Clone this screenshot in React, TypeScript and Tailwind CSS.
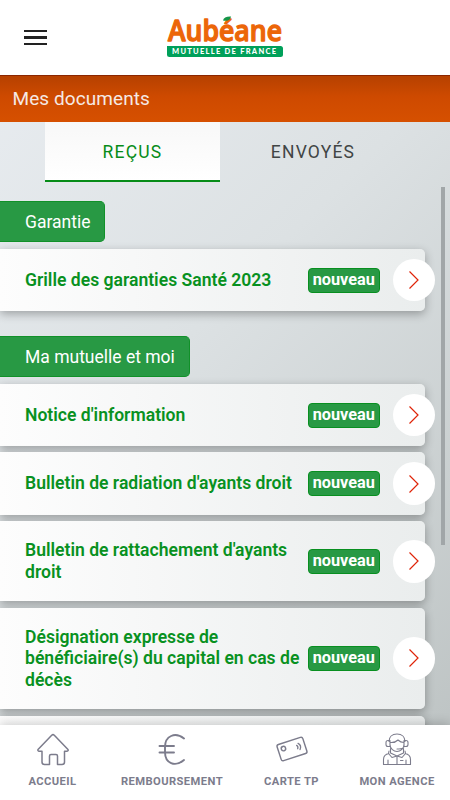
import React from "react";

const documents = [
  { lines: ["Notice d'information"], height: "h-[62px]" },
  { lines: ["Bulletin de radiation d'ayants droit"], height: "h-[62.5px]" },
  { lines: ["Bulletin de rattachement d'ayants", "droit"], height: "h-[80px]" },
  { lines: ["Désignation expresse de", "bénéficiaire(s) du capital en cas de", "décès"], height: "h-[101.5px]" },
  { lines: [""], height: "h-[62px]" },
];

function Logo() {
  return (
    <svg width="116" height="52" viewBox="0 -10 116 52" className="block overflow-visible">
      <text x="1" y="25" textLength="114" lengthAdjust="spacingAndGlyphs" fontFamily="'Open Sans', sans-serif" fontWeight="600" fontSize="29" fill="#ec6608" stroke="#ec6608" strokeWidth="1.3" strokeLinejoin="round">Aubéane</text>
      <path d="M56 4.400C56.500 1.500 59.500 0.300 64 0.500C63.500 4 60.500 5.500 56 4.400Z" fill="#159548" />
      <path d="M0 30h113.500q2.500 0 2.500 2.500v6q0 2.500-2.500 2.500H2.500Q0 41 0 38.500Z" fill="#00a05a" />
      <text x="5" y="38" textLength="104" fontFamily="Lato, sans-serif" fontWeight="900" fontSize="7.500" fill="#fff">MUTUELLE DE FRANCE</text>
    </svg>
  );
}

function Document({ lines, height }: { lines: string[]; height: string }) {
  return (
    <div className={`flex w-[425px] shrink-0 items-center rounded-r-[5px] bg-gradient-to-r from-[#fdfdfd] to-[#eaeded] pl-[25px] shadow-[0_3px_10px_rgba(0,0,0,0.3)] ${height}`}>
      <div className="w-[282.500px] shrink-0 pt-px text-[17.570px] font-semibold leading-[21.330px] text-[#089121]">
        {lines.map((line) => (
          <div key={line} className="whitespace-nowrap">{line}</div>
        ))}
      </div>
      {lines[0] && (
        <>
          <div className="flex h-[25px] w-[72.500px] shrink-0 items-center justify-center rounded-[4px] border border-[#088f20] bg-[#289944] text-[16.300px] font-bold leading-none text-white">nouveau</div>
          <div className="ml-[12.500px] flex size-[42.500px] shrink-0 items-center justify-center rounded-full bg-white">
            <svg width="12" height="20" viewBox="0 0 12 20" fill="none" stroke="#df2408" strokeWidth="1.200"><path d="M1.500 1.500 10 10 1.500 18.500" /></svg>
          </div>
        </>
      )}
    </div>
  );
}

function Category({ title, width }: { title: string; width: string }) {
  return <div className={`flex h-[41px] shrink-0 items-center rounded-r-[5px] border border-l-0 border-[#119129] bg-[#289944] pl-[25px] pt-px text-[17.500px] text-white ${width}`}>{title}</div>;
}

const iconProps = { width: 34, height: 34, viewBox: "0 0 34 34", fill: "none", stroke: "#7c7c8c", strokeWidth: 1.3, strokeLinejoin: "round" as const, strokeLinecap: "round" as const };

function Footer() {
  return (
    <nav className="relative z-10 h-[75px] shrink-0 bg-white shadow-[0_-2px_10px_rgba(0,0,0,0.18)]">
      <div className="flex h-full pt-[7px] text-[11.200px] font-bold leading-[14px] tracking-[0.420px] text-[#7c7c8c]">
        <div className="flex w-[105px] flex-col items-center">
          <svg {...iconProps} strokeWidth={1.5}><path d="M2 17.500 15.700 3.200q1.300-1.200 2.600 0L32 17.500q.6 1.500-1 1.700h-2.500V30q0 2.500-2.500 2.500h-4.500V24q0-1.500-1.500-1.500h-5q-1.500 0-1.500 1.500v8.500H8.500Q6 32.500 6 30V19.200H3Q1.500 18.800 2 17.500Z" /></svg>
          <span className="mt-[9px]">ACCUEIL</span>
        </div>
        <div className="flex w-[134px] flex-col items-center">
          <svg {...iconProps} strokeWidth={1.9}><path d="M29 6.500C20 -.5 10 4 10 15v5c0 11.500 10 15.500 19 8M4.500 14H19M4.500 20.500H19" /></svg>
          <span className="mt-[9px]">REMBOURSEMENT</span>
        </div>
        <div className="flex w-[105px] flex-col items-center">
          <svg {...iconProps} strokeWidth={1.45}><g transform="rotate(-18 17 17)"><rect x="3.500" y="8.500" width="27" height="17" rx="2" /><circle cx="9" cy="14" r="2.200" /><path d="M22.500 15q1.500 1.500 0 3.500M24.500 13.500q3 3 0 6.500" strokeWidth="1.300" /></g></svg>
          <span className="mt-[9px]">CARTE TP</span>
        </div>
        <div className="flex w-[106px] flex-col items-center">
          <svg {...iconProps} strokeWidth={1.1}>
            <path d="M9 9.500C9 5 12 2 17 2s8 3 8 7.500M9 8.500H8Q6 8.500 6 10.500v2q0 2 2 2h2v-6ZM25 8.500h1q2 0 2 2v2q0 2-2 2h-2v-6ZM10 10.500q5 .5 8-2.500 2.500 2.500 6 2.500v2c0 4.500-4 7-7 7s-7-2.500-7-7ZM17 17h2q3.500 0 5.500-2.500" />
            <path d="M10.500 16.500v4.500l6.500 3 6.500-3v-4.500M9 19l-.5 2.500 3.500 4 5-1.500 5 1.500 3.500-4L25 19M9 21.500Q3.500 22.500 3.500 27.500v5h27v-5q0-5-5.500-6M8 28v4.500M26 28v4.500M17 24v8.500M20.500 28.500h2.500" />
          </svg>
          <span className="mt-[9px]">MON AGENCE</span>
        </div>
      </div>
    </nav>
  );
}

export default function App() {
  return (
    <div className="flex h-[800px] w-[450px] flex-col overflow-hidden bg-[linear-gradient(135deg,#e8ecf0_5%,#dce1e3_42%,#bbc1c1_100%)] font-['Roboto','Liberation_Sans',sans-serif]">
      <header className="flex h-[74.500px] shrink-0 items-start bg-white">
        <div className="ml-6 mt-[30px] flex w-[143px] flex-col gap-[4px]">
          <span className="h-[2.300px] w-[22.500px] bg-[#222]" />
          <span className="h-[2.300px] w-[22.500px] bg-[#222]" />
          <span className="h-[2.300px] w-[22.500px] bg-[#222]" />
        </div>
        <div className="mt-1.5"><Logo /></div>
      </header>
      <div className="flex h-[47.500px] shrink-0 items-center border-t border-[#8b2600] bg-[linear-gradient(to_bottom,#b64100,#ce4a00_45%,#d65000)] pl-[12.500px] text-[19px] tracking-[0.080px] text-[#f5e9e4]">Mes documents</div>
      <div className="flex h-[60px] shrink-0 pl-[45px] text-[17.500px] tracking-[1.200px]">
        <div className="flex w-[175px] items-center justify-center border-b-[2.500px] border-[#078c18] bg-gradient-to-b from-[#f8f8f8] to-white pt-0.5 text-[#078c18]">REÇUS</div>
        <div className="flex w-[186px] items-center justify-center text-[#414545]">ENVOYÉS</div>
      </div>
      <main className="relative flex min-h-0 flex-1 flex-col overflow-hidden pt-[19px]">
        <Category title="Garantie" width="w-[105px]" />
        <div className="mb-[25px] mt-[7px] flex shrink-0"><Document lines={["Grille des garanties Santé 2023"]} height="h-[62px]" /></div>
        <Category title="Ma mutuelle et moi" width="w-[190px]" />
        <div className="mt-[7px] flex flex-col gap-[6.400px]">
          {documents.map((document, index) => <Document key={index} {...document} />)}
        </div>
        <div className="absolute right-[5px] top-[5px] h-[358px] w-[4px] bg-[#a1a6a8]" />
      </main>
      <Footer />
    </div>
  );
}
